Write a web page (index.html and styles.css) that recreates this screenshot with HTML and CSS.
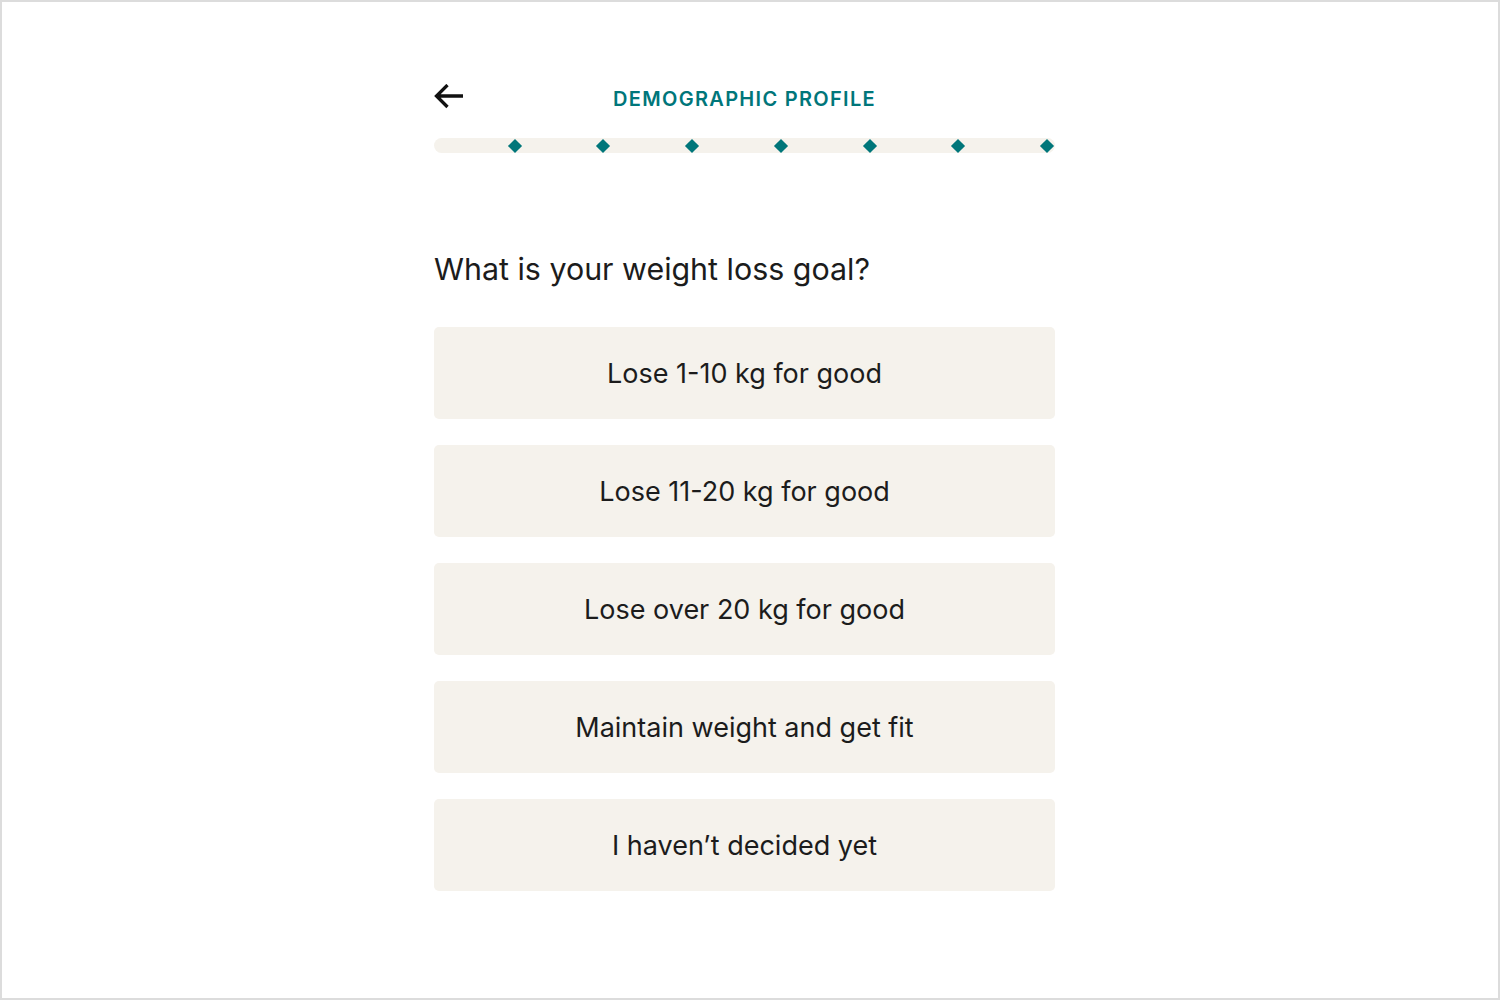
FILE: index.html
```html
<!DOCTYPE html>
<html>
<head>
<meta charset="utf-8">
<link rel="stylesheet" href="styles.css">
</head>
<body>
<div class="frame">
  <div class="quiz">
    <header class="head">
      <button class="back" aria-label="Back">
        <svg width="30" height="30" viewBox="0 0 30 30"><path d="M2.5 12 H29 M13.5 1 L2.5 12 L13.5 23" fill="none" stroke="#111" stroke-width="3.3" stroke-linejoin="miter"/></svg>
      </button>
      <h1 class="title">DEMOGRAPHIC PROFILE</h1>
    </header>
    <div class="progress">
      <div class="seg"><span class="dot"></span></div>
      <div class="seg"><span class="dot"></span></div>
      <div class="seg"><span class="dot"></span></div>
      <div class="seg"><span class="dot"></span></div>
      <div class="seg"><span class="dot"></span></div>
      <div class="seg"><span class="dot"></span></div>
      <div class="seg"><span class="dot"></span></div>
    </div>
    <h2 class="question">What is your weight loss goal?</h2>
    <div class="options">
      <button class="option">Lose 1-10 kg for good</button>
      <button class="option">Lose 11-20 kg for good</button>
      <button class="option">Lose over 20 kg for good</button>
      <button class="option">Maintain weight and get fit</button>
      <button class="option">I haven’t decided yet</button>
    </div>
  </div>
</div>
</body>
</html>
```

FILE: styles.css
```css
* { box-sizing: border-box; }
html, body { margin: 0; padding: 0; background: #fff; }
body { font-family: "Inter", "Liberation Sans", sans-serif; color: #1c1c1c; }
.frame {
  width: 1500px;
  height: 1000px;
  border: 2px solid #dcdcdc;
  background: #fff;
}
.quiz {
  width: 621px;
  margin-left: 432px;
  padding-top: 80px;
}
.head {
  display: flex;
  align-items: center;
  height: 34px;
}
.back {
  width: 30px;
  height: 30px;
  padding: 0;
  border: 0;
  background: none;
  display: flex;
  margin-left: 0;
}
.title {
  flex: 1;
  margin: 0 30px 0 0;
  text-align: center;
  font-size: 20px;
  font-weight: 600;
  color: #00767a;
  letter-spacing: 1.3px;
  line-height: 34px;
}
.progress {
  margin-top: 22px;
  height: 15px;
  border-radius: 8px;
  background: #f5f2ec;
  display: flex;
}
.seg {
  flex: 1;
  display: flex;
  justify-content: flex-end;
  align-items: center;
  padding-right: 3px;
}
.dot {
  width: 10px;
  height: 10px;
  background: #00767a;
  transform: rotate(45deg);
}
.question {
  margin: 96px 0 0 0;
  font-size: 30.4px;
  font-weight: 400;
  line-height: 40px;
  color: #1c1c1c;
}
.options {
  margin-top: 38px;
  display: flex;
  flex-direction: column;
  gap: 26px;
}
.option {
  height: 92px;
  border: 0;
  border-radius: 5px;
  background: #f5f2ec;
  font-family: inherit;
  font-size: 27px;
  color: #1c1c1c;
  text-align: center;
  padding: 0;
}
```
